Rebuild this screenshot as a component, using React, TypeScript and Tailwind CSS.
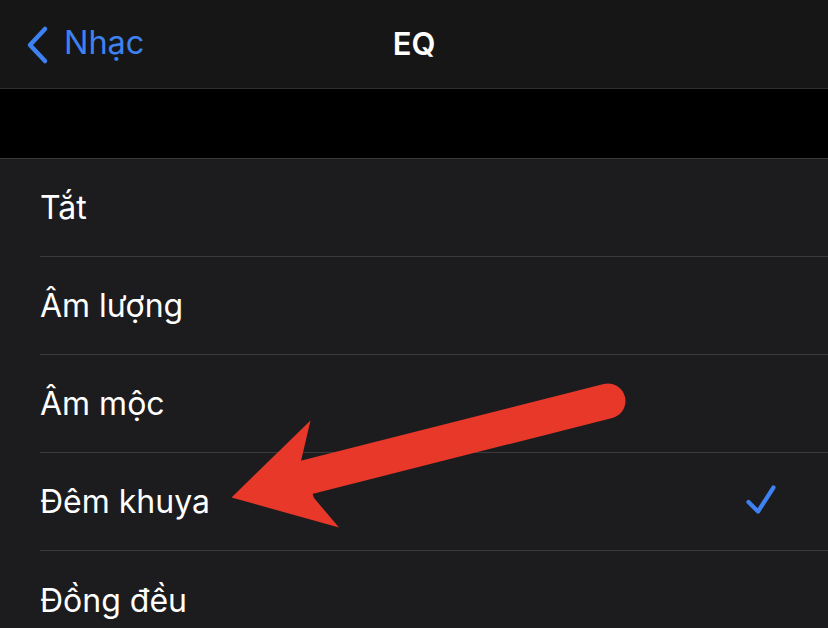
import React from "react";

const rows = ["Tắt", "Âm lượng", "Âm mộc", "Đêm khuya", "Đồng đều"];

export default function App() {
  return (
    <div
      className="relative w-[828px] h-[628px] overflow-hidden bg-[#1c1c1e] text-white"
      style={{ fontFamily: "Inter, 'Noto Sans', sans-serif" }}
    >
      <div className="relative h-[89px] bg-[#161616] border-b border-[#2e2e30] flex items-center">
        <div className="flex items-center pl-[24px] text-[#3d82f0]">
          <svg width="26" height="40" viewBox="0 0 26 40" className="mt-[1px]">
            <path d="M21 4 L6 20 L21 36" fill="none" stroke="#3d82f0" strokeWidth="4.5" strokeLinecap="round" strokeLinejoin="round" />
          </svg>
          <span className="ml-[14px] text-[32.5px] leading-none tracking-[-0.1px] mb-[2px]">Nhạc</span>
        </div>
        <div className="absolute left-0 right-0 top-0 h-[88px] flex items-center justify-center pointer-events-none">
          <span className="text-[31px] font-semibold leading-none mb-[2px]">EQ</span>
        </div>
      </div>
      <div className="h-[70px] bg-black border-b border-[#38383a]" />
      <div className="flex flex-col">
        {rows.map((r, i) => (
          <div key={r} className="pl-[40px]">
            <div className={`h-[98px] flex items-center pr-[48px] ${i < rows.length - 1 ? "border-b border-[#3a3a3c]" : ""}`}>
              <span className="text-[32px] leading-none flex-1 mt-[1px]">{r}</span>
              {i === 3 && (
                <svg width="36" height="36" viewBox="0 0 36 36">
                  <path d="M4.5 18 L14 27.5 L29.5 3.5" fill="none" stroke="#3d82f0" strokeWidth="4.2" strokeLinecap="round" strokeLinejoin="round" />
                </svg>
              )}
            </div>
          </div>
        ))}
      </div>
      <svg className="absolute left-0 top-0 pointer-events-none" width="828" height="628" viewBox="0 0 828 628">
        <line x1="300" y1="479" x2="608" y2="401" stroke="#e8382a" strokeWidth="35" strokeLinecap="round" />
        <polygon points="231.5,497.5 310.5,420.5 301,461 314,498 339,527.5" fill="#e8382a" />
      </svg>
    </div>
  );
}
